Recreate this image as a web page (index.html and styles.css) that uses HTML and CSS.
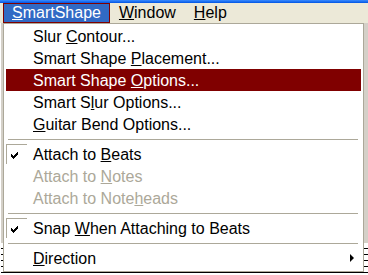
FILE: index.html
```html
<!DOCTYPE html>
<html lang="en">
<head>
    <meta charset="UTF-8">
    <meta name="viewport" content="width=device-width, initial-scale=1.0">
    <title>SmartShape menu</title>
    <link rel="stylesheet" href="styles.css">
</head>
<body>
    <div class="screen">
        <div class="titlebar"></div>
        <div class="menubar">
            <span class="menubar-item active"><u>S</u>martShape</span>
            <span class="menubar-item"><u>W</u>indow</span>
            <span class="menubar-item"><u>H</u>elp</span>
        </div>
        <div class="workspace">
            <div class="score"></div>
        </div>

        <!-- menu déroulant -->
        <div class="menu">
            <div class="menu-item"><span class="slot"></span><span class="label">Slur <u>C</u>ontour...</span></div>
            <div class="menu-item"><span class="slot"></span><span class="label">Smart Shape <u>P</u>lacement...</span></div>
            <div class="menu-item selected"><span class="slot"></span><span class="label">Smart Shape <u>O</u>ptions...</span></div>
            <div class="menu-item"><span class="slot"></span><span class="label">Smart S<u>l</u>ur Options...</span></div>
            <div class="menu-item"><span class="slot"></span><span class="label"><u>G</u>uitar Bend Options...</span></div>
            <div class="separator"></div>
            <div class="menu-item">
                <span class="slot checked">
                    <svg width="7" height="7" viewBox="0 0 7 7"><path d="M6 0h1v1h-1z M5 1h2v1h-2z M0 2h1v1h-1z M4 2h3v1h-3z M0 3h2v1h-2z M3 3h3v1h-3z M0 4h5v1h-5z M1 5h3v1h-3z M2 6h1v1h-1z" fill="#000"/></svg>
                </span>
                <span class="label">Attach to <u>B</u>eats</span>
            </div>
            <div class="menu-item disabled"><span class="slot"></span><span class="label">Attach to <u>N</u>otes</span></div>
            <div class="menu-item disabled"><span class="slot"></span><span class="label">Attach to Note<u>h</u>eads</span></div>
            <div class="separator"></div>
            <div class="menu-item">
                <span class="slot checked">
                    <svg width="7" height="7" viewBox="0 0 7 7"><path d="M6 0h1v1h-1z M5 1h2v1h-2z M0 2h1v1h-1z M4 2h3v1h-3z M0 3h2v1h-2z M3 3h3v1h-3z M0 4h5v1h-5z M1 5h3v1h-3z M2 6h1v1h-1z" fill="#000"/></svg>
                </span>
                <span class="label">Snap <u>W</u>hen Attaching to Beats</span>
            </div>
            <div class="separator"></div>
            <div class="menu-item"><span class="slot"></span><span class="label"><u>D</u>irection</span><span class="arrow"></span></div>
        </div>
    </div>
</body>
</html>
```

FILE: styles.css
```css
* {
    margin: 0;
    padding: 0;
    box-sizing: border-box;
}

body {
    font-family: "Liberation Sans", Arial, sans-serif;
    font-size: 16px;
    color: #000;
    background: #d4d0c8;
}

.screen {
    position: relative;
    width: 368px;
    height: 275px;
    overflow: hidden;
}

.titlebar {
    height: 3px;
    background: linear-gradient(#3a8cff, #0054e3);
}

.menubar {
    display: flex;
    height: 20px;
    padding-left: 3px;
    background: #ece9d8;
}

.menubar-item {
    border: 1px solid transparent;
    padding: 0 8px;
    line-height: 18px;
}

.menubar-item.active {
    background: #316ac5;
    border-color: #800000;
    color: #fff;
}

.workspace {
    display: flex;
    flex-direction: column;
    justify-content: flex-end;
    height: 252px;
    background: #d4d0c8;
    border-left: 1px solid #fff;
}

.score {
    height: 32px;
    background: #fff repeating-linear-gradient(#fff 0, #fff 5px, #000 5px, #000 6px);
}

.menu {
    position: absolute;
    left: 3px;
    top: 23px;
    width: 361px;
    height: 249px;
    padding: 1px 2px 2px;
    border: 1px solid #aca899;
    background: #fff;
}

.menu-item {
    display: flex;
    align-items: flex-start;
    height: 22px;
}

.menu-item .slot {
    flex: none;
    width: 21px;
    height: 20px;
    margin-top: 1px;
    margin-right: 6px;
}

.menu-item .slot.checked {
    border-top: 1px solid #aca899;
    border-left: 1px solid #aca899;
    padding: 7px 0 0 4px;
}

.menu-item .slot svg {
    display: block;
}

.menu-item .label {
    margin-top: 2px;
    line-height: 20px;
    white-space: nowrap;
}

.menu-item.selected {
    background: #800000;
    color: #fff;
}

.menu-item.disabled {
    color: #aca899;
}

.menu-item .arrow {
    align-self: center;
    margin-left: auto;
    margin-right: 7px;
    width: 0;
    height: 0;
    border-left: 4px solid #000;
    border-top: 4px solid transparent;
    border-bottom: 4px solid transparent;
}

.separator {
    height: 1px;
    margin: 4px 3px 3px 2px;
    background: #aca899;
}
```
